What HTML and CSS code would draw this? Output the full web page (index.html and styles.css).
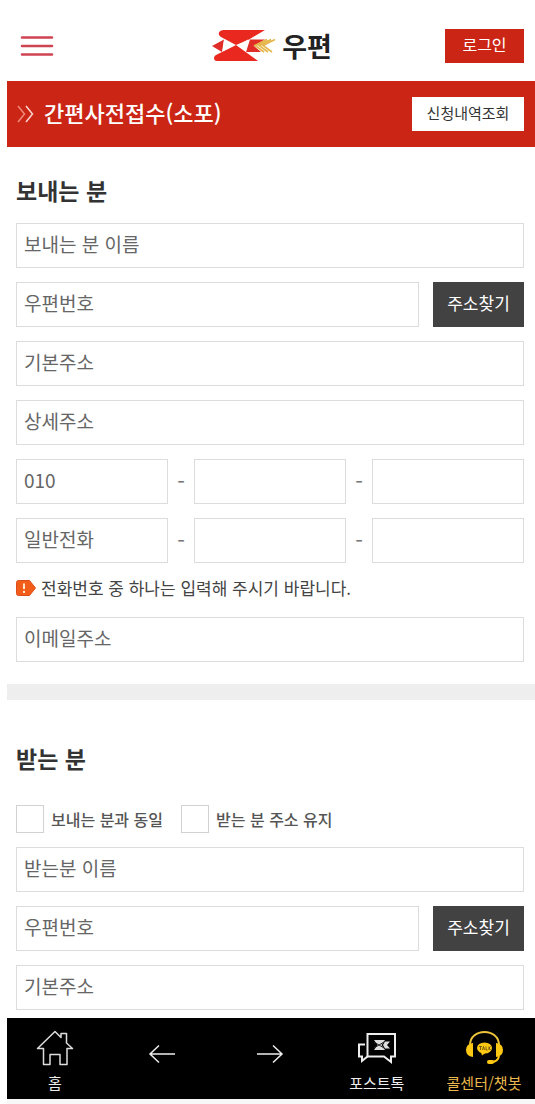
FILE: index.html
```html
<!DOCTYPE html>
<html lang="ko">
<head>
<meta charset="utf-8">
<meta name="viewport" content="width=device-width, initial-scale=1">
<title>간편사전접수(소포)</title>
<link rel="stylesheet" href="styles.css">
</head>
<body>
<div class="page">
  <header class="top">
    <button class="menu" type="button" aria-label="메뉴">
      <svg width="34" height="22" viewBox="0 0 34 22"><path d="M2 2.5H32M2 11H32M2 19.5H32" stroke="#cf4453" stroke-width="2.6" stroke-linecap="round"/></svg>
    </button>
    <a class="brand" href="#">
      <svg width="64" height="32" viewBox="0 0 64 32" aria-hidden="true">
        <path d="M12 0H53L37 9.500L24 15L9 7Q6 5 7 2.500Q8 0 12 0ZM5 31H46L24 15L4 25Q2 26 2 28Q2 31 5 31Z" fill="#e9281f"/>
        <path d="M0 16L12 9.500L10 22ZM38 9.500H53L42 16L49 22H34Z" fill="#e02d27"/>
        <path d="M12 10L22.500 15.500L10.500 21.500ZM36 9.500L25.500 15.500L34 21.500Z" fill="#fff"/>
        <path d="M55 9.500L43 15.500L52 22M59 9.500L47 15.500L56 22M63 9.500L51 15.500L60 22" fill="none" stroke="#e5b64b" stroke-width="1.700"/>
      </svg>
      <span>우편</span>
    </a>
    <button class="login" type="button">로그인</button>
  </header>

  <div class="title-bar">
    <svg width="18" height="18" viewBox="0 0 18 18" fill="none" stroke-width="1.500" aria-hidden="true"><path d="M1 1L7.500 9L1 17" stroke="#f08a7c"/><path d="M9 1L15.500 9L9 17" stroke="#fbd5cf"/></svg>
    <h1>간편사전접수(소포)</h1>
    <button class="history" type="button">신청내역조회</button>
  </div>

  <main>
    <section class="block sender">
      <h2>보내는 분</h2>
      <div class="fields">
        <input class="field" type="text" aria-label="보내는 분 이름" placeholder="보내는 분 이름">
        <div class="row zip">
          <input class="field" type="text" aria-label="우편번호" placeholder="우편번호">
          <button class="find" type="button">주소찾기</button>
        </div>
        <input class="field" type="text" aria-label="기본주소" placeholder="기본주소">
        <input class="field" type="text" aria-label="상세주소" placeholder="상세주소">
        <div class="row phone">
          <input class="field" type="tel" aria-label="휴대전화 앞자리" placeholder="010">
          <span class="dash">-</span>
          <input class="field" type="tel" aria-label="휴대전화 중간자리">
          <span class="dash">-</span>
          <input class="field" type="tel" aria-label="휴대전화 끝자리">
        </div>
        <div class="row phone">
          <input class="field" type="tel" aria-label="일반전화 지역번호" placeholder="일반전화">
          <span class="dash">-</span>
          <input class="field" type="tel" aria-label="일반전화 중간자리">
          <span class="dash">-</span>
          <input class="field" type="tel" aria-label="일반전화 끝자리">
        </div>
      </div>
      <p class="notice">
        <svg width="20" height="16" viewBox="0 0 20 16" aria-hidden="true"><path d="M2.500 .5H13.500L19.500 8L13.500 15.500H2.500Q.5 15.500 .5 13.500V2.500Q.5 .5 2.500 .5Z" fill="#f25d19" stroke="#dc4e1c"/><path d="M8 3.500V9M8 10.800V13" stroke="#ffe6c9" stroke-width="2"/></svg>
        전화번호 중 하나는 입력해 주시기 바랍니다.
      </p>
      <input class="field" type="email" aria-label="이메일주소" placeholder="이메일주소">
    </section>

    <section class="block receiver">
      <h2>받는 분</h2>
      <div class="checks">
        <label><input type="checkbox">보내는 분과 동일</label>
        <label><input type="checkbox">받는 분 주소 유지</label>
      </div>
      <div class="fields">
        <input class="field" type="text" aria-label="받는분 이름" placeholder="받는분 이름">
        <div class="row zip">
          <input class="field" type="text" aria-label="받는 분 우편번호" placeholder="우편번호">
          <button class="find" type="button">주소찾기</button>
        </div>
        <input class="field" type="text" aria-label="받는 분 기본주소" placeholder="기본주소">
      </div>
    </section>
  </main>

  <nav class="tabs">
    <a href="#">
      <svg width="38" height="36" viewBox="0 0 38 36" fill="none" stroke="#ddd" stroke-width="1.500" stroke-linejoin="round"><path d="M1.500 18.500L19 1.500L25 7.500V3.500H30.500V13L36.500 18.500H31V34.500H24V24.500H14V34.500H7.500V18.500Z"/></svg>
      <span>홈</span>
    </a>
    <a class="arrow" href="#" aria-label="이전">
      <svg width="28" height="20" viewBox="0 0 28 20" fill="none" stroke="#eee" stroke-width="1.500"><path d="M27 10H2M11 1.500L2 10L11 18.500"/></svg>
    </a>
    <a class="arrow" href="#" aria-label="다음">
      <svg width="28" height="20" viewBox="0 0 28 20" fill="none" stroke="#eee" stroke-width="1.500"><path d="M1 10H26M17 1.500L26 10L17 18.500"/></svg>
    </a>
    <a href="#">
      <svg width="40" height="36" viewBox="0 0 40 36" fill="none" stroke="#eee" stroke-width="2"><path d="M10.500 4H38V26.500H34V32L27 26.500H10.500Z"/><path d="M8 14.500H2V26.500H5V31L10.500 26.500"/><path d="M17 10H28L24.500 15L28 20H17L20.500 15ZM28 11.500H33L30 15L33 18.500H28L26 15Z" fill="#ddd" stroke="none"/><path d="M17 12L22 15L17 18M27 12L22 15L27 18" stroke="#222" stroke-width="1"/></svg>
      <span>포스트톡</span>
    </a>
    <a class="talk" href="#">
      <svg width="40" height="36" viewBox="0 0 40 36" fill="none"><path d="M6 15C6 -2.500 35 -2.500 35 15" stroke="#edc33a" stroke-width="2"/><path d="M9 13V27Q2 26 2 20Q2 14 9 13ZM32 13V27Q39 26 39 20Q39 14 32 13Z" fill="#fdc813"/><path d="M35 26Q34 32 27 32" stroke="#fdc813" stroke-width="2"/><rect x="23" y="30" width="7" height="4" rx="2" fill="#fdc813"/><ellipse cx="20.500" cy="18" rx="7.500" ry="5.500" fill="#fdc813"/><path d="M17 22L18 25.500L22 22.500Z" fill="#fdc813"/><path d="M15 16.500H18M16.500 16.500V20M18.500 20L19.500 16.500L20.500 20M22 16.500V20H23.500M25 16.500V20M26.500 16.500L25 18L26.500 20" stroke="#59460c" stroke-width=".8"/></svg>
      <span>콜센터/챗봇</span>
    </a>
  </nav>
</div>
</body>
</html>
```
FILE: styles.css
```css
* {
  box-sizing: border-box;
}

body {
  margin: 0;
  background: #fff;
  color: #333;
  font-family: "Noto Sans CJK KR", sans-serif;
  font-size: 16px;
}

button,
input {
  margin: 0;
  border: 0;
  border-radius: 0;
  font-family: inherit;
}

svg {
  display: block;
  flex: none;
}

a {
  color: inherit;
  text-decoration: none;
}

.page {
  padding-left: 7px;
}

.top {
  display: grid;
  grid-template-columns: 1fr auto 1fr;
  align-items: center;
  height: 81px;
  padding: 10px 11px 0 13px;
}

.menu {
  padding: 0;
  background: none;
  justify-self: start;
}

.brand {
  display: flex;
  align-items: center;
  gap: 6px;
  color: #222;
  font-size: 27px;
  font-weight: 700;
  line-height: 32px;
}

.login {
  justify-self: end;
  width: 79px;
  height: 34px;
  padding: 0 0 4px;
  background: #cb2615;
  color: #fff;
  font-size: 16px;
}

.title-bar {
  display: flex;
  align-items: center;
  gap: 9px;
  height: 66px;
  padding: 0 11px 0 10px;
  background: #cb2615;
  color: #fff;
}

.title-bar h1 {
  margin: 0;
  padding-bottom: 4px;
  font-size: 22px;
  font-weight: 500;
  line-height: 32px;
}

.history {
  width: 112px;
  height: 34px;
  margin-left: auto;
  padding: 0 0 4px;
  background: #fff;
  color: #333;
  font-size: 15px;
}

.block {
  padding: 0 11px 0 9px;
}

.block h2 {
  margin: 0;
  font-size: 23px;
  font-weight: 700;
  line-height: 32px;
}

.sender {
  padding-top: 27px;
  padding-bottom: 22px;
  border-bottom: 16px solid #eee;
}

.sender h2 {
  margin-bottom: 17px;
}

.receiver {
  padding-top: 42px;
  padding-bottom: 8px;
}

.fields {
  display: grid;
  gap: 14px;
}

.row {
  display: flex;
}

.zip {
  gap: 14px;
}

.field {
  flex: 1;
  width: 100%;
  min-width: 0;
  height: 45px;
  padding: 0 7px 4px;
  border: 1px solid #dcdcdc;
  background: #fff;
  color: #666;
  font-size: 19px;
}

.field::placeholder {
  color: #666;
  opacity: 1;
}

.find {
  width: 91px;
  height: 45px;
  padding: 0 0 4px;
  background: #424242;
  color: #fff;
  font-size: 17px;
}

.dash {
  width: 26px;
  color: #777;
  font-size: 22px;
  line-height: 42px;
  text-align: center;
}

.notice {
  display: flex;
  align-items: center;
  gap: 5px;
  margin: 12px 0 16px;
  color: #444;
  font-size: 17px;
  line-height: 26px;
}

.checks {
  display: flex;
  gap: 18px;
  margin: 31px 0 14px;
}

.checks label {
  display: flex;
  align-items: center;
  gap: 7px;
  color: #555;
  font-size: 16px;
  font-weight: 500;
  line-height: 24px;
}

.checks input {
  width: 28px;
  height: 28px;
  border: 1px solid #d2d2d2;
  background: #fff;
  appearance: none;
}

.checks input:checked {
  background: #cb2615;
}

.tabs {
  display: flex;
  justify-content: space-between;
  padding: 12px 11px 5px 8px;
  border-bottom: 5px solid #f7f7f7;
  background: #000;
  color: #eee;
  font-size: 15px;
  line-height: 22px;
}

.tabs a {
  display: flex;
  flex-direction: column;
  align-items: center;
  gap: 6px;
  width: 80px;
  white-space: nowrap;
}

.tabs .arrow {
  padding-top: 14px;
}

.tabs .talk {
  color: #eab84c;
}
```
